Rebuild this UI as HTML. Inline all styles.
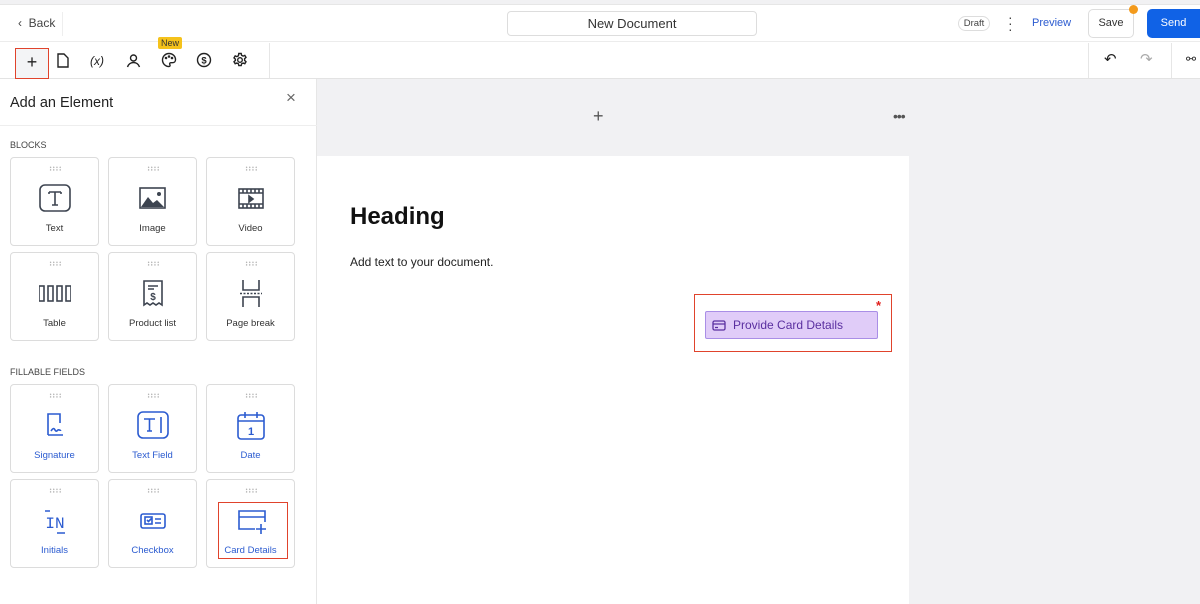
<!DOCTYPE html>
<html><head><meta charset="utf-8"><style>
*{box-sizing:border-box;margin:0;padding:0}
body{width:1200px;height:604px;overflow:hidden;font-family:"Liberation Sans",sans-serif;background:#f1f1f3;position:relative;color:#222}
.abs{position:absolute}
.top{left:0;width:1200px;background:#fff;border-top:1px solid #e6e6e6;border-bottom:1px solid #ececec;top:4px;height:38px}
.tb{left:0;top:42px;width:1200px;height:37px;background:#fff;border-bottom:1px solid #e3e3e3}
.panel{left:0;top:79px;width:317px;height:525px;background:#fff;border-right:1px solid #e6e6e6}
.tile{position:absolute;width:89px;height:89px;border:1px solid #dcdcdc;border-radius:4px;background:#fff;text-align:center;font-size:9.5px;color:#333}
.tile .dots{position:absolute;top:8px;left:38px;width:13px;height:5px;background-image:radial-gradient(circle,#aaa 0.7px,transparent 0.8px);background-size:3.2px 2.6px}
.tile svg{position:absolute;left:28px;top:26px}
.tile .lb{position:absolute;left:0;right:0;top:65px}
.tile.b{color:#2b5bd0}
</style></head><body>
<div class="abs top"></div>
<div class="abs" style="left:18px;top:16px;font-size:12px;color:#444">&#8249;&nbsp; Back</div>
<div class="abs" style="left:62px;top:12px;width:1px;height:24px;background:#eee"></div>
<div class="abs" style="left:507px;top:11px;width:250px;height:25px;border:1px solid #ddd;border-radius:4px;font-size:13px;color:#333;text-align:center;line-height:23px">New Document</div>
<div class="abs" style="left:958px;top:16px;width:32px;height:15px;border:1px solid #ddd;border-radius:8px;font-size:9.5px;color:#444;text-align:center;line-height:13px">Draft</div>
<div class="abs" style="left:1008px;top:14px;font-size:14px;color:#444;line-height:6px">·<br>·<br>·</div>
<div class="abs" style="left:1032px;top:17px;font-size:11px;color:#2b5bd0">Preview</div>
<div class="abs" style="left:1088px;top:9px;width:46px;height:29px;border:1px solid #ddd;border-radius:5px;font-size:11px;color:#333;text-align:center;line-height:27px">Save</div>
<div class="abs" style="left:1129px;top:5px;width:9px;height:9px;border-radius:50%;background:#f39a1c"></div>
<div class="abs" style="left:1147px;top:9px;width:53px;height:29px;border-radius:5px 0 0 5px;background:#1062e6;color:#fff;font-size:11px;text-align:center;line-height:29px">Send</div>
<div class="abs tb"></div>
<div class="abs" style="left:15px;top:48px;width:34px;height:31px;border:1.5px solid #e0432c;background:#f3f4f6;text-align:center;font-size:18px;line-height:27px;color:#222">+</div>
<svg class="abs" style="left:56px;top:53px" width="14" height="15" viewBox="0 0 14 15" fill="none" stroke="#222" stroke-width="1.4"><path d="M2 1h6l4 4v9H2z"/></svg>
<div class="abs" style="left:90px;top:54px;font-size:12px;font-style:italic;color:#222">(<i>x</i>)</div>
<svg class="abs" style="left:126px;top:53px" width="15" height="15" viewBox="0 0 15 15" fill="none" stroke="#222" stroke-width="1.4"><circle cx="7.5" cy="5" r="3"/><path d="M1.5 14c1-3 3.5-4.5 6-4.5s5 1.5 6 4.5"/></svg>
<div class="abs" style="left:158px;top:37px;width:24px;height:12px;background:#f5c21b;border-radius:2px;font-size:9px;text-align:center;line-height:12px;color:#333">New</div>
<svg class="abs" style="left:161px;top:52px" width="16" height="16" viewBox="0 0 16 16" fill="none" stroke="#222" stroke-width="1.4"><path d="M8 1.5a6.5 6.5 0 1 0 0 13c1.2 0 1.3-1.2.8-2-.5-.9.1-1.8 1.1-1.8h1.6c1.8 0 3-1.3 3-3C14.5 4.2 11.6 1.5 8 1.5z"/><circle cx="5" cy="6" r=".6"/><circle cx="8" cy="4.5" r=".6"/><circle cx="11" cy="6" r=".6"/></svg>
<svg class="abs" style="left:196px;top:52px" width="16" height="16" viewBox="0 0 16 16" fill="none" stroke="#222" stroke-width="1.4"><circle cx="8" cy="8" r="6.5"/><text x="8" y="11.5" font-size="9.5" text-anchor="middle" fill="#222" stroke="none" font-family="Liberation Sans" font-weight="bold">$</text></svg>
<svg class="abs" style="left:232px;top:52px" width="16" height="16" viewBox="0 0 16 16" fill="none" stroke="#222" stroke-width="1.4"><circle cx="8" cy="8" r="2.3"/><path d="M6.8 1.5h2.4l.4 1.8 1.5.8 1.7-.7 1.2 2-1.4 1.3v1.7l1.4 1.3-1.2 2-1.7-.7-1.5.8-.4 1.8H6.8l-.4-1.8-1.5-.8-1.7.7-1.2-2 1.4-1.3V7.2L2 5.9l1.2-2 1.7.7 1.5-.8z"/></svg>
<div class="abs" style="left:269px;top:43px;width:1px;height:35px;background:#e6e6e6"></div>
<div class="abs" style="left:1088px;top:43px;width:1px;height:35px;background:#e6e6e6"></div>
<div class="abs" style="left:1171px;top:43px;width:1px;height:35px;background:#e6e6e6"></div>
<div class="abs" style="left:1104px;top:50px;font-size:15px;color:#222">↶</div>
<div class="abs" style="left:1140px;top:50px;font-size:15px;color:#aaa">↷</div>
<div class="abs" style="left:1186px;top:52px;font-size:12px;color:#222">⚯</div>

<div class="abs panel"></div>
<div class="abs" style="left:10px;top:95px;font-size:14.5px;color:#222">Add an Element</div>
<div class="abs" style="left:286px;top:88px;font-size:17px;color:#666">×</div>
<div class="abs" style="left:0;top:125px;width:317px;height:1px;background:#eee"></div>
<div class="abs" style="left:10px;top:140px;font-size:9px;color:#444">BLOCKS</div>
<div class="abs" style="left:10px;top:367px;font-size:9px;color:#444">FILLABLE FIELDS</div>

<div class="tile" style="left:10px;top:157px"><div class="dots"></div><svg width="32" height="30" viewBox="0 0 32 30" fill="none" stroke="#3d4450" stroke-width="1.6"><rect x="1" y="1" width="30" height="26" rx="5"/><path d="M10 8h12M16 8v13M13 21h6M10 8v2M22 8v2"/></svg><div class="lb">Text</div></div>
<div class="tile" style="left:108px;top:157px"><div class="dots"></div><svg width="32" height="30" viewBox="0 0 32 30"><rect x="3" y="4" width="25" height="20" fill="none" stroke="#3d4450" stroke-width="1.6"/><path d="M4 23l7-10 5 6 4-3 7 7z" fill="#3d4450"/><circle cx="22" cy="10" r="2" fill="#3d4450"/></svg><div class="lb">Image</div></div>
<div class="tile" style="left:206px;top:157px"><div class="dots"></div><svg width="32" height="30" viewBox="0 0 32 30" fill="none" stroke="#3d4450" stroke-width="1.6"><rect x="4" y="5" width="24" height="19"/><path d="M4 9h24M4 20h24M8 5v4M12 5v4M16 5v4M20 5v4M24 5v4M8 20v4M12 20v4M16 20v4M20 20v4M24 20v4"/><path d="M14 12v6l4-3z" fill="#3d4450"/></svg><div class="lb">Video</div></div>
<div class="tile" style="left:10px;top:252px"><div class="dots"></div><svg width="32" height="30" viewBox="0 0 32 30" fill="none" stroke="#3d4450" stroke-width="1.6"><rect x="0" y="7" width="5" height="15"/><rect x="9" y="7" width="5" height="15"/><rect x="18" y="7" width="5" height="15"/><rect x="27" y="7" width="5" height="15"/></svg><div class="lb">Table</div></div>
<div class="tile" style="left:108px;top:252px"><div class="dots"></div><svg width="32" height="30" viewBox="0 0 32 30" fill="none" stroke="#3d4450" stroke-width="1.6"><path d="M7 2h18v24l-3-2-3 2-3-2-3 2-3-2-3 2z"/><path d="M11 7h10M11 10h6"/><text x="16" y="21" font-size="10" text-anchor="middle" fill="#3d4450" stroke="none" font-family="Liberation Sans" font-weight="bold">$</text></svg><div class="lb">Product list</div></div>
<div class="tile" style="left:206px;top:252px"><div class="dots"></div><svg width="32" height="30" viewBox="0 0 32 30" fill="none" stroke="#3d4450" stroke-width="1.6"><path d="M8 1v10h16V1M8 28V18h16v10"/><path d="M5 14.5h22" stroke-dasharray="2 1.5"/></svg><div class="lb">Page break</div></div>

<div class="tile b" style="left:10px;top:384px"><div class="dots"></div><svg width="32" height="30" viewBox="0 0 32 30" fill="none" stroke="#2b5bd0" stroke-width="1.6"><path d="M9 24V3h12v9M9 24h15"/><path d="M12 20c2-3 3-3 4-1s2 1 3 0 2 1 3 0"/></svg><div class="lb">Signature</div></div>
<div class="tile b" style="left:108px;top:384px"><div class="dots"></div><svg width="32" height="30" viewBox="0 0 32 30" fill="none" stroke="#2b5bd0" stroke-width="1.6"><rect x="1" y="1" width="30" height="26" rx="5"/><path d="M7 8h11M12.5 8v12M10 20h5M24 6v16"/></svg><div class="lb">Text Field</div></div>
<div class="tile b" style="left:206px;top:384px"><div class="dots"></div><svg width="32" height="30" viewBox="0 0 32 30" fill="none" stroke="#2b5bd0" stroke-width="1.6"><rect x="3" y="4" width="26" height="24" rx="3"/><path d="M3 10h26M10 1v6M22 1v6"/><text x="16" y="24" font-size="11" text-anchor="middle" fill="#2b5bd0" stroke="none" font-family="Liberation Sans" font-weight="bold">1</text></svg><div class="lb">Date</div></div>
<div class="tile b" style="left:10px;top:479px"><div class="dots"></div><svg width="32" height="30" viewBox="0 0 32 30"><text x="16" y="22" font-size="16" text-anchor="middle" fill="#2b5bd0" font-family="Liberation Mono">IN</text><path d="M6 5h5M18 27h8" stroke="#2b5bd0" stroke-width="1.6"/></svg><div class="lb">Initials</div></div>
<div class="tile b" style="left:108px;top:479px"><div class="dots"></div><svg width="32" height="30" viewBox="0 0 32 30" fill="none" stroke="#2b5bd0" stroke-width="1.6"><rect x="4" y="8" width="24" height="14" rx="2"/><rect x="8" y="11" width="7" height="7"/><path d="M10 14l1.5 1.5 3-3M18 13h6M18 17h6"/></svg><div class="lb">Checkbox</div></div>
<div class="tile b" style="left:206px;top:479px"><div class="dots"></div><div class="abs" style="left:11px;top:22px;width:70px;height:57px;border:1.5px solid #e0432c"></div><svg width="34" height="30" viewBox="0 0 34 30" fill="none" stroke="#2b5bd0" stroke-width="1.6"><path d="M20 23H4V5h26v11M4 11h26"/><path d="M26 18v10M21 23h10"/></svg><div class="lb">Card Details</div></div>

<div class="abs" style="left:593px;top:106px;font-size:18px;color:#555">+</div>
<div class="abs" style="left:893px;top:108px;font-size:14px;color:#555;letter-spacing:-1px">•••</div>
<div class="abs" style="left:317px;top:156px;width:592px;height:448px;background:#fff"></div>
<div class="abs" style="left:350px;top:203px;font-size:24px;font-weight:bold;color:#111">Heading</div>
<div class="abs" style="left:350px;top:255px;font-size:12px;color:#222">Add text to your document.</div>
<div class="abs" style="left:694px;top:294px;width:198px;height:58px;border:1.5px solid #e0432c"></div>
<div class="abs" style="left:705px;top:311px;width:173px;height:28px;background:#e0ccf8;border:1px solid #a98ee6;border-radius:2px;color:#5a2fa0;font-size:12px;line-height:27px;padding-left:27px">Provide Card Details</div>
<svg class="abs" style="left:712px;top:320px" width="14" height="11" viewBox="0 0 14 11" fill="none" stroke="#5a2fa0" stroke-width="1.3"><rect x="1" y="1" width="12" height="9" rx="1.5"/><path d="M1 4h12M3 7.5h3"/></svg>
<div class="abs" style="left:876px;top:298px;font-size:13px;color:#e0201c;font-weight:bold">*</div>
</body></html>
